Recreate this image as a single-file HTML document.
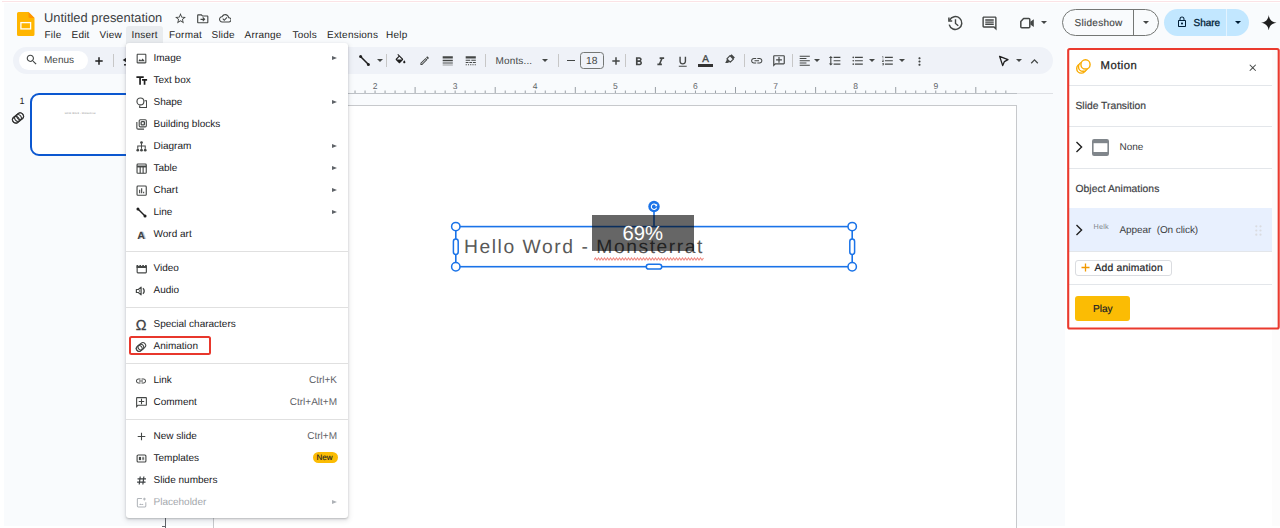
<!DOCTYPE html>
<html><head><meta charset="utf-8"><title>Untitled presentation - Google Slides</title>
<style>
*{box-sizing:border-box;margin:0;padding:0}
html,body{width:1280px;height:528px;overflow:hidden;background:#fff}
body{position:relative;font-family:"Liberation Sans",sans-serif;color:#1f1f1f;-webkit-font-smoothing:antialiased;text-rendering:geometricPrecision}
.a{position:absolute}
.t{position:absolute;white-space:nowrap;line-height:1}
#bg{left:4px;top:3px;width:1276px;height:523px;background:#f9fbfd}
#topline{left:2px;top:1px;width:1278px;height:1px;background:#fbe3e6}
/* menubar */
.mb{font-size:10px;color:#1f1f1f;top:31px;letter-spacing:.22px;margin-left:-.5px}
/* toolbar */
#tb{left:13.300px;top:46.500px;width:1039.700px;height:27.500px;border-radius:14px;background:#eff2f8}
.sep{position:absolute;width:1px;background:#c7c7c7;top:54px;height:13px}
/* dropdown */
#menu{left:126px;top:43px;width:222px;height:475px;background:#fff;border-radius:3px;box-shadow:0 1px 2px rgba(60,64,67,.28),0 2px 5px 1px rgba(60,64,67,.13)}
.mi{position:absolute;left:27.5px;font-size:10px;color:#202124;white-space:nowrap;line-height:1}
.sc{position:absolute;right:11px;font-size:10px;color:#5f6368;white-space:nowrap;line-height:1}
.ar{position:absolute;left:205.500px;width:0;height:0;border-left:5.500px solid #5f6368;border-top:2.600px solid transparent;border-bottom:2.600px solid transparent}
.ms{position:absolute;left:0;width:222px;height:1px;background:#e0e0e0}
/* panel */
#panel{left:1065px;top:48px;width:207px;height:478px;background:#fff}
#pstrip{left:1272px;top:48px;width:8px;height:478px;background:#fcfcfc}
#red{left:1067px;top:48px;width:212.5px;height:281px;border:2px solid #ea3a2e;border-radius:2px}
.pd{position:absolute;left:1069px;width:203px;height:1px;background:#e3e6ea}

.hc{width:9px;height:9px;border-radius:50%;border:1.500px solid #1a73e8;background:#fff}
.hv{width:5.200px;height:15.600px;border-radius:2.600px;border:1.300px solid #1a73e8;background:#fff}
.hh{width:15.600px;height:5.200px;border-radius:2.600px;border:1.300px solid #1a73e8;background:#fff}

.med{-webkit-text-stroke:.25px currentColor}
.med2{-webkit-text-stroke:.18px currentColor}
</style></head><body>
<div class="a" id="bg"></div>
<div class="a" id="topline"></div>

<!-- header -->
<svg class="a" style="left:17px;top:12.200px" width="18" height="24" viewBox="0 0 18 24"><path d="M1.6 0h9.9L17.5 6v16.4a1.6 1.6 0 0 1-1.6 1.6H1.6A1.6 1.6 0 0 1 0 22.400V1.600A1.600 1.600 0 0 1 1.600 0z" fill="#ffb500"/><path d="M11.500 0L17.500 6h-4.400a1.600 1.600 0 0 1-1.600-1.600z" fill="#ff9400"/><rect x="3.900" y="10.600" width="9.700" height="6.300" fill="none" stroke="#fff" stroke-width="1.300"/></svg>
<div class="t" id="title" style="left:44px;top:12px;font-size:12.900px;color:#3c4043">Untitled presentation</div>
<div class="t mb" style="left:45px">File</div>
<div class="t mb" style="left:72px">Edit</div>
<div class="t mb" style="left:100px">View</div>
<div class="a" style="left:126px;top:25.5px;width:37px;height:18px;background:#e9ecef;border-radius:3px 3px 0 0"></div>
<div class="t mb" style="left:132px">Insert</div>
<div class="t mb" style="left:169.500px">Format</div>
<div class="t mb" style="left:212px">Slide</div>
<div class="t mb" style="left:245px">Arrange</div>
<div class="t mb" style="left:293px">Tools</div>
<div class="t mb" style="left:327.500px">Extensions</div>
<div class="t mb" style="left:386.500px">Help</div>


<!-- title icons -->
<svg class="a" style="left:173.800px;top:12px" width="13" height="13" viewBox="0 0 24 24"><path fill="#444746" d="M22 9.240l-7.190-.620L12 2 9.190 8.630 2 9.240l5.460 4.730L5.820 21 12 17.270 18.180 21l-1.630-7.030L22 9.240zM12 15.400l-3.760 2.270 1-4.280-3.320-2.880 4.380-.380L12 6.100l1.710 4.040 4.380.380-3.320 2.880 1 4.280L12 15.400z"/></svg>
<svg class="a" style="left:196px;top:12px" width="13.500" height="13.500" viewBox="0 0 24 24"><path fill="#444746" d="M20 6h-8l-2-2H4c-1.100 0-2 .900-2 2v12c0 1.100.900 2 2 2h16c1.100 0 2-.900 2-2V8c0-1.100-.900-2-2-2zm0 12H4V6h5.170l2 2H20v10zm-7.160-4H8v-2h4.840l-1.590-1.590L12.660 9l4 4-4 4-1.410-1.410L12.840 14z"/></svg>
<svg class="a" style="left:218.700px;top:12.300px" width="12.600" height="12.600" viewBox="0 0 24 24"><path fill="#444746" d="M19.350 10.040C18.670 6.590 15.640 4 12 4 9.110 4 6.600 5.640 5.350 8.040 2.340 8.360 0 10.910 0 14c0 3.310 2.690 6 6 6h13c2.760 0 5-2.240 5-5 0-2.640-2.050-4.780-4.650-4.960zM19 18H6c-2.210 0-4-1.790-4-4 0-2.050 1.530-3.760 3.560-3.970l1.070-.110.500-.950C8.080 7.140 9.940 6 12 6c2.620 0 4.880 1.860 5.390 4.430l.300 1.500 1.530.110c1.560.100 2.780 1.410 2.780 2.960 0 1.650-1.350 3-3 3zm-9-3.820l-2.090-2.090L6.500 13.500 10 17l6.010-6.010-1.410-1.410z"/></svg>
<!-- right header icons -->
<svg class="a" style="left:946px;top:13.500px" width="19" height="19" viewBox="946 13 19 19" fill="none" stroke="#444746" stroke-width="1.500"><path d="M949.600 19.300A6.400 6.400 0 1 1 949.200 23.600"/><path d="M948.900 16.600v3.300h3.300" stroke-linejoin="miter"/><path d="M955.500 18.300v4.200l2.800 2.300" stroke-width="1.400"/></svg>
<svg class="a" style="left:981px;top:15px" width="17" height="17" viewBox="0 0 24 24"><path fill="#444746" d="M21.990 4c0-1.100-.890-2-1.990-2H4c-1.100 0-2 .900-2 2v12c0 1.100.900 2 2 2h14l4 4-.010-18zM20 4v13.170L18.830 16H4V4h16zM6 12h12v2H6zm0-3h12v2H6zm0-3h12v2H6z"/></svg>
<svg class="a" style="left:1016px;top:13px" width="22" height="20" viewBox="1016 13 22 20"><path d="M1023.600 18.500h5.200a1 1 0 0 1 1 1v7.200a1 1 0 0 1-1 1h-7a1 1 0 0 1-1-1v-5.300z" fill="none" stroke="#444746" stroke-width="1.500" stroke-linejoin="round"/><path d="M1030.300 21.800l3.500-2.500v7.600l-3.500-2.500z" fill="#444746"/></svg>
<svg class="a" style="left:1041px;top:21px" width="6" height="3" viewBox="0 0 10 5"><path fill="#444746" d="M0 0l5 5 5-5z"/></svg>
<!-- slideshow -->
<div class="a" style="left:1062px;top:8.500px;width:96.500px;height:27.500px;border:1px solid #747775;border-radius:14px"></div>
<div class="a" style="left:1133px;top:9px;width:1px;height:27px;background:#747775"></div>
<div class="t" style="left:1074.500px;top:19px;font-size:10px;color:#444746;letter-spacing:.28px;-webkit-text-stroke:.15px #444746" id="sshow">Slideshow</div>
<svg class="a" style="left:1143px;top:21px" width="6" height="3" viewBox="0 0 10 5"><path fill="#444746" d="M0 0l5 5 5-5z"/></svg>
<!-- share -->
<div class="a" style="left:1164px;top:9px;width:85px;height:27px;border-radius:14px;background:#c2e7ff"></div>
<div class="a" style="left:1226px;top:9px;width:1px;height:27px;background:#e3f3ff"></div>
<svg class="a" style="left:1175.500px;top:16px" width="12" height="12" viewBox="0 0 24 24"><path fill="#001d35" d="M18 8h-1V6c0-2.760-2.240-5-5-5S7 3.240 7 6v2H6c-1.100 0-2 .900-2 2v10c0 1.100.900 2 2 2h12c1.100 0 2-.900 2-2V10c0-1.100-.900-2-2-2zM9 6c0-1.660 1.340-3 3-3s3 1.340 3 3v2H9V6zm9 14H6V10h12v10zm-6-3c1.100 0 2-.900 2-2s-.900-2-2-2-2 .900-2 2 .900 2 2 2z"/></svg>
<div class="t" style="left:1193.500px;top:19px;font-size:10px;color:#001d35;-webkit-text-stroke:.3px #001d35" id="share">Share</div>
<svg class="a" style="left:1234.500px;top:21px" width="6" height="3" viewBox="0 0 10 5"><path fill="#001d35" d="M0 0l5 5 5-5z"/></svg>
<svg class="a" style="left:1261px;top:14.500px" width="15.500" height="15.500" viewBox="0 0 24 24"><path fill="#1f1f1f" d="M12 0C12.900 7.200 16.800 11.100 24 12 16.800 12.900 12.900 16.800 12 24 11.100 16.800 7.200 12.900 0 12 7.200 11.100 11.100 7.200 12 0z"/></svg>

<!-- toolbar -->
<div class="a" id="tb"></div>
<div class="a" style="left:19px;top:50.500px;width:69px;height:19.500px;border-radius:10px;background:#fff"></div>
<div class="t" style="left:44px;top:56px;font-size:10px;color:#444746">Menus</div>

<svg class="a" style="left:24.800px;top:53.300px" width="13.500" height="13.500" viewBox="0 0 24 24"><path fill="#444746" d="M15.500 14h-.790l-.280-.270C15.410 12.590 16 11.110 16 9.500 16 5.910 13.090 3 9.500 3S3 5.910 3 9.500 5.910 16 9.500 16c1.610 0 3.090-.590 4.230-1.570l.270.280v.790l5 4.990L20.490 19l-4.990-5zm-6 0C7.010 14 5 11.990 5 9.500S7.010 5 9.500 5 14 7.010 14 9.500 11.990 14 9.500 14z"/></svg>
<svg class="a" style="left:95.300px;top:56.500px" width="8" height="8" viewBox="0 0 8 8"><path d="M4 .3v7.400M.3 4h7.400" stroke="#1f1f1f" stroke-width="1.500" fill="none"/></svg>
<div class="sep" style="left:113px"></div>
<svg class="a" style="left:120px;top:54px" width="8" height="14" viewBox="120 54 8 14"><path d="M122.700 60L127 57.300V62.700z" fill="#1f1f1f"/><rect x="124" y="64.100" width="3" height="1.400" fill="#1f1f1f"/></svg>
<svg class="a" style="left:357.500px;top:54px" width="13" height="13" viewBox="0 0 13 13"><path d="M2.500 2.500L10.500 10.500" stroke="#1f1f1f" stroke-width="1.600"/><circle cx="2.600" cy="2.600" r="1.500" fill="#1f1f1f"/><circle cx="10.400" cy="10.400" r="1.500" fill="#1f1f1f"/></svg>
<svg class="a" style="left:376.5px;top:58.5px" width="6" height="3" viewBox="0 0 10 5"><path fill="#444746" d="M0 0l5 5 5-5z"/></svg>
<div class="sep" style="left:386px"></div>
<svg class="a" style="left:393.800px;top:53.800px" width="13" height="13" viewBox="0 0 24 24"><path fill="#1f1f1f" d="M16.560 8.940L7.620 0 6.210 1.410l2.380 2.380-5.150 5.150c-.590.590-.590 1.540 0 2.120l5.500 5.500c.290.290.680.440 1.060.440s.770-.150 1.060-.440l5.500-5.500c.590-.580.590-1.530 0-2.120zM5.210 10L10 5.210 14.790 10H5.210zM19 11.500s-2 2.170-2 3.500c0 1.100.900 2 2 2s2-.900 2-2c0-1.330-2-3.500-2-3.500z"/></svg>
<svg class="a" style="left:418.700px;top:54.800px" width="11.300" height="11.300" viewBox="0 0 24 24"><path fill="#444746" d="M14.060 9.020l.920.920L5.920 19H5v-.920l9.060-9.060M17.660 3c-.250 0-.510.100-.700.290l-1.830 1.830 3.750 3.750 1.830-1.830c.390-.390.390-1.020 0-1.410l-2.340-2.340c-.200-.200-.450-.290-.710-.290zm-3.600 3.190L3 17.250V21h3.750L17.810 9.940l-3.750-3.750z"/></svg>
<svg class="a" style="left:440.800px;top:54.400px" width="13.500" height="13.500" viewBox="0 0 24 24"><path fill="#444746" d="M3 17h18v-2H3v2zm0 3h18v-1H3v1zm0-7h18v-3H3v3zm0-9v4h18V4H3z"/></svg>
<svg class="a" style="left:463.800px;top:54.400px" width="13.500" height="13.500" viewBox="0 0 24 24"><path fill="#444746" d="M3 16h5v-2H3v2zm6.500 0h5v-2h-5v2zm6.500 0h5v-2h-5v2zM3 20h2v-2H3v2zm4 0h2v-2H7v2zm4 0h2v-2h-2v2zm4 0h2v-2h-2v2zm4 0h2v-2h-2v2zM3 12h8v-2H3v2zm10 0h8v-2h-8v2zM3 4v4h18V4H3z"/></svg>
<div class="sep" style="left:485px"></div>
<div class="t" style="left:496px;top:57px;font-size:10px;color:#444746;letter-spacing:.15px;margin-left:-.5px" id="fontname">Monts...</div>
<svg class="a" style="left:541.900px;top:58.600px" width="6" height="3" viewBox="0 0 10 5"><path fill="#444746" d="M0 0l5 5 5-5z"/></svg>
<div class="sep" style="left:558px"></div>
<div class="a" style="left:567.300px;top:59.800px;width:7.700px;height:1.500px;background:#444746"></div>
<div class="a" style="left:580px;top:52px;width:24px;height:17px;border:1px solid #747775;border-radius:3.500px"></div>
<div class="t" style="left:586px;top:56.500px;font-size:10.300px;color:#444746" id="fsize">18</div>
<svg class="a" style="left:611.500px;top:56.500px" width="8" height="8" viewBox="0 0 8 8"><path d="M4 .3v7.400M.3 4h7.400" stroke="#444746" stroke-width="1.500" fill="none"/></svg>
<div class="sep" style="left:625px"></div>
<svg class="a" style="left:632px;top:54.600px" width="13.5" height="13.5" viewBox="0 0 24 24"><path fill="#444746" d="M15.600 10.790c.970-.670 1.650-1.770 1.650-2.790 0-2.260-1.750-4-4-4H7v14h7.040c2.090 0 3.710-1.700 3.710-3.790 0-1.520-.860-2.820-2.150-3.420zM10 6.500h3c.830 0 1.500.670 1.500 1.500s-.670 1.500-1.500 1.500h-3v-3zm3.500 9H10v-3h3.500c.830 0 1.500.670 1.500 1.500s-.670 1.500-1.500 1.500z"/></svg>
<svg class="a" style="left:654px;top:54.800px" width="13.5" height="13.5" viewBox="0 0 24 24"><path fill="#444746" d="M10 4v3h2.210l-3.420 8H6v3h8v-3h-2.210l3.420-8H18V4z"/></svg>
<svg class="a" style="left:676px;top:54.5px" width="13.5" height="13.5" viewBox="0 0 24 24"><path fill="#444746" d="M12 17c3.310 0 6-2.690 6-6V3h-2.500v8c0 1.930-1.570 3.500-3.500 3.500S8.500 12.930 8.500 11V3H6v8c0 3.310 2.690 6 6 6zm-7 2v2h14v-2H5z"/></svg>
<div class="t" style="left:702.300px;top:54.500px;font-size:10px;color:#444746;-webkit-text-stroke:.35px #444746">A</div>
<div class="a" style="left:698px;top:64.400px;width:15.200px;height:2.800px;background:#333"></div>
<svg class="a" style="left:724.500px;top:54px" width="10.500" height="9.500" viewBox="0 0 10.500 9.500"><path d="M6.500 .2L9.900 3.600 8.400 5.100 5 1.700z" fill="#444746"/><path d="M5 1.700L8.400 5.100 5.300 8.200 1.900 4.800z" fill="none" stroke="#444746" stroke-width="1.200" stroke-linejoin="round"/><path d="M2.100 5.200L4.800 7.900 2.500 8.900H.2z" fill="#444746"/></svg>
<div class="sep" style="left:743.5px"></div>
<svg class="a" style="left:749.5px;top:54px" width="13.5" height="13.5" viewBox="0 0 24 24"><path fill="#444746" d="M3.900 12c0-1.710 1.390-3.100 3.100-3.100h4V7H7c-2.760 0-5 2.240-5 5s2.240 5 5 5h4v-1.900H7c-1.710 0-3.100-1.390-3.100-3.100zM8 13h8v-2H8v2zm9-6h-4v1.900h4c1.710 0 3.100 1.390 3.100 3.100s-1.390 3.100-3.100 3.100h-4V17h4c2.760 0 5-2.240 5-5s-2.240-5-5-5z"/></svg>
<svg class="a" style="left:771.500px;top:53.500px" width="14" height="14" viewBox="0 0 24 24"><path fill="#444746" transform="translate(24 0) scale(-1 1)" d="M22 4c0-1.100-.900-2-2-2H4c-1.100 0-2 .900-2 2v12c0 1.100.900 2 2 2h14l4 4V4zm-2 13.170L18.830 16H4V4h16v13.170zM13 5h-2v4H7v2h4v4h2v-4h4V9h-4z"/></svg>
<div class="sep" style="left:791.500px"></div>
<svg class="a" style="left:797.5px;top:54px" width="13.5" height="13.5" viewBox="0 0 24 24"><path fill="#444746" d="M15 15H3v2h12v-2zm0-8H3v2h12V7zM3 13h18v-2H3v2zm0 8h18v-2H3v2zM3 3v2h18V3H3z"/></svg>
<svg class="a" style="left:813.700px;top:58.500px" width="6" height="3" viewBox="0 0 10 5"><path fill="#444746" d="M0 0l5 5 5-5z"/></svg>
<svg class="a" style="left:827.5px;top:54px" width="13.5" height="13.5" viewBox="0 0 24 24"><path fill="#444746" d="M6 7h2.500L5 3.500 1.500 7H4v10H1.500L5 20.500 8.500 17H6V7zm4-2v2h12V5H10zm0 14h12v-2H10v2zm0-6h12v-2H10v2z"/></svg>
<svg class="a" style="left:850.5px;top:54px" width="13.5" height="13.5" viewBox="0 0 24 24"><path fill="#444746" d="M4 10.500c-.830 0-1.500.670-1.500 1.500s.670 1.500 1.500 1.500 1.500-.670 1.500-1.500-.670-1.500-1.500-1.500zm0-6c-.830 0-1.500.670-1.500 1.500S3.170 7.500 4 7.500 5.500 6.830 5.500 6 4.830 4.500 4 4.500zm0 12c-.830 0-1.500.680-1.500 1.500s.680 1.500 1.500 1.500 1.500-.680 1.500-1.500-.670-1.500-1.500-1.500zM7 19h14v-2H7v2zm0-6h14v-2H7v2zm0-8v2h14V5H7z"/></svg>
<svg class="a" style="left:869px;top:58.5px" width="6" height="3" viewBox="0 0 10 5"><path fill="#444746" d="M0 0l5 5 5-5z"/></svg>
<svg class="a" style="left:881px;top:54px" width="13.5" height="13.5" viewBox="0 0 24 24"><path fill="#444746" d="M2 17h2v.500H3v1h1v.500H2v1h3v-4H2v1zm1-9h1V4H2v1h1v3zm-1 3h1.800L2 13.100v.900h3v-1H3.200L5 10.900V10H2v1zm5-6v2h14V5H7zm0 14h14v-2H7v2zm0-6h14v-2H7v2z"/></svg>
<svg class="a" style="left:899px;top:58.5px" width="6" height="3" viewBox="0 0 10 5"><path fill="#444746" d="M0 0l5 5 5-5z"/></svg>
<svg class="a" style="left:912.5px;top:54.5px" width="13" height="13" viewBox="0 0 24 24"><path fill="#444746" d="M12 8c1.100 0 2-.900 2-2s-.900-2-2-2-2 .900-2 2 .900 2 2 2zm0 2c-1.100 0-2 .900-2 2s.900 2 2 2 2-.900 2-2-.900-2-2-2zm0 6c-1.100 0-2 .900-2 2s.900 2 2 2 2-.900 2-2-.900-2-2-2z"/></svg>
<svg class="a" style="left:997px;top:54px" width="14" height="14" viewBox="0 0 14 14"><path d="M2.600 2.300L11 5.600 7.400 7.600 5.700 11.600z" fill="none" stroke="#1f1f1f" stroke-width="1.300" stroke-linejoin="round"/></svg>
<svg class="a" style="left:1015.5px;top:58.5px" width="6" height="3" viewBox="0 0 10 5"><path fill="#444746" d="M0 0l5 5 5-5z"/></svg>
<svg class="a" style="left:1026.500px;top:53.700px" width="15" height="15" viewBox="0 0 24 24"><path fill="#444746" d="M12 8l-6 6 1.410 1.410L12 10.830l4.590 4.580L18 14z"/></svg>

<!-- ruler -->
<div class="a" style="left:126px;top:92.500px;width:890.500px;height:1.500px;background:#bdc1c6"></div>
<div class="a" style="left:1016.500px;top:93px;width:36px;height:1px;background:#dfe1e5"></div>
<svg class="a" style="left:0;top:0" width="1280" height="100" viewBox="0 0 1280 100" fill="#9aa0a6"><rect x="214.35" y="90.5" width="1" height="2.5"/><rect x="224.36" y="90.5" width="1" height="2.5"/><rect x="234.38" y="90.5" width="1" height="2.5"/><rect x="244.39" y="90.5" width="1" height="2.5"/><rect x="254.40" y="87.0" width="1" height="6"/><rect x="264.41" y="90.5" width="1" height="2.5"/><rect x="274.43" y="90.5" width="1" height="2.5"/><rect x="284.44" y="90.5" width="1" height="2.5"/><rect x="294.45" y="90.5" width="1" height="2.5"/><rect x="304.46" y="90.5" width="1" height="2.5"/><rect x="314.48" y="90.5" width="1" height="2.5"/><rect x="324.49" y="90.5" width="1" height="2.5"/><rect x="334.50" y="87.0" width="1" height="6"/><rect x="344.51" y="90.5" width="1" height="2.5"/><rect x="354.52" y="90.5" width="1" height="2.5"/><rect x="364.54" y="90.5" width="1" height="2.5"/><rect x="374.55" y="90.5" width="1" height="2.5"/><rect x="384.56" y="90.5" width="1" height="2.5"/><rect x="394.57" y="90.5" width="1" height="2.5"/><rect x="404.59" y="90.5" width="1" height="2.5"/><rect x="414.60" y="87.0" width="1" height="6"/><rect x="424.61" y="90.5" width="1" height="2.5"/><rect x="434.62" y="90.5" width="1" height="2.5"/><rect x="444.64" y="90.5" width="1" height="2.5"/><rect x="454.65" y="90.5" width="1" height="2.5"/><rect x="464.66" y="90.5" width="1" height="2.5"/><rect x="474.67" y="90.5" width="1" height="2.5"/><rect x="484.69" y="90.5" width="1" height="2.5"/><rect x="494.70" y="87.0" width="1" height="6"/><rect x="504.71" y="90.5" width="1" height="2.5"/><rect x="514.73" y="90.5" width="1" height="2.5"/><rect x="524.74" y="90.5" width="1" height="2.5"/><rect x="534.75" y="90.5" width="1" height="2.5"/><rect x="544.76" y="90.5" width="1" height="2.5"/><rect x="554.77" y="90.5" width="1" height="2.5"/><rect x="564.79" y="90.5" width="1" height="2.5"/><rect x="574.80" y="87.0" width="1" height="6"/><rect x="584.81" y="90.5" width="1" height="2.5"/><rect x="594.82" y="90.5" width="1" height="2.5"/><rect x="604.84" y="90.5" width="1" height="2.5"/><rect x="614.85" y="90.5" width="1" height="2.5"/><rect x="624.86" y="90.5" width="1" height="2.5"/><rect x="634.88" y="90.5" width="1" height="2.5"/><rect x="644.89" y="90.5" width="1" height="2.5"/><rect x="654.90" y="87.0" width="1" height="6"/><rect x="664.91" y="90.5" width="1" height="2.5"/><rect x="674.92" y="90.5" width="1" height="2.5"/><rect x="684.94" y="90.5" width="1" height="2.5"/><rect x="694.95" y="90.5" width="1" height="2.5"/><rect x="704.96" y="90.5" width="1" height="2.5"/><rect x="714.97" y="90.5" width="1" height="2.5"/><rect x="724.99" y="90.5" width="1" height="2.5"/><rect x="735.00" y="87.0" width="1" height="6"/><rect x="745.01" y="90.5" width="1" height="2.5"/><rect x="755.02" y="90.5" width="1" height="2.5"/><rect x="765.04" y="90.5" width="1" height="2.5"/><rect x="775.05" y="90.5" width="1" height="2.5"/><rect x="785.06" y="90.5" width="1" height="2.5"/><rect x="795.07" y="90.5" width="1" height="2.5"/><rect x="805.09" y="90.5" width="1" height="2.5"/><rect x="815.10" y="87.0" width="1" height="6"/><rect x="825.11" y="90.5" width="1" height="2.5"/><rect x="835.12" y="90.5" width="1" height="2.5"/><rect x="845.14" y="90.5" width="1" height="2.5"/><rect x="855.15" y="90.5" width="1" height="2.5"/><rect x="865.16" y="90.5" width="1" height="2.5"/><rect x="875.17" y="90.5" width="1" height="2.5"/><rect x="885.19" y="90.5" width="1" height="2.5"/><rect x="895.20" y="87.0" width="1" height="6"/><rect x="905.21" y="90.5" width="1" height="2.5"/><rect x="915.23" y="90.5" width="1" height="2.5"/><rect x="925.24" y="90.5" width="1" height="2.5"/><rect x="935.25" y="90.5" width="1" height="2.5"/><rect x="945.26" y="90.5" width="1" height="2.5"/><rect x="955.27" y="90.5" width="1" height="2.5"/><rect x="965.29" y="90.5" width="1" height="2.5"/><rect x="975.30" y="87.0" width="1" height="6"/><rect x="985.31" y="90.5" width="1" height="2.5"/><rect x="995.32" y="90.5" width="1" height="2.5"/><rect x="1005.34" y="90.5" width="1" height="2.5"/></svg>
<div class="t" style="left:288.9px;top:82px;width:12px;text-align:center;font-size:8.500px;color:#5f6368">1</div>
<div class="t" style="left:369.0px;top:82px;width:12px;text-align:center;font-size:8.500px;color:#5f6368">2</div>
<div class="t" style="left:449.1px;top:82px;width:12px;text-align:center;font-size:8.500px;color:#5f6368">3</div>
<div class="t" style="left:529.2px;top:82px;width:12px;text-align:center;font-size:8.500px;color:#5f6368">4</div>
<div class="t" style="left:609.4px;top:82px;width:12px;text-align:center;font-size:8.500px;color:#5f6368">5</div>
<div class="t" style="left:689.4px;top:82px;width:12px;text-align:center;font-size:8.500px;color:#5f6368">6</div>
<div class="t" style="left:769.5px;top:82px;width:12px;text-align:center;font-size:8.500px;color:#5f6368">7</div>
<div class="t" style="left:849.6px;top:82px;width:12px;text-align:center;font-size:8.500px;color:#5f6368">8</div>
<div class="t" style="left:929.8px;top:82px;width:12px;text-align:center;font-size:8.500px;color:#5f6368">9</div>


<!-- slide -->
<div class="a" style="left:213px;top:105px;width:804px;height:430px;background:#fff;border:1px solid #c7c9cc"></div>


<!-- filmstrip -->
<div class="t" style="left:19.500px;top:97px;font-size:9px;color:#1f1f1f">1</div>
<svg class="a" style="left:10.100px;top:109.800px" width="16" height="16" viewBox="0 0 16 16" fill="none" stroke="#333" stroke-width="1.050"><g transform="rotate(-40 8 8)"><rect x="1.900" y="4.700" width="12.200" height="6.600" rx="3.300"/><circle cx="5.200" cy="8" r="3.300"/><circle cx="8" cy="8" r="3.300"/><circle cx="10.800" cy="8" r="3.300"/></g></svg>
<div class="a" style="left:30px;top:93px;width:112px;height:62.500px;border:2px solid #0b57d0;border-radius:9px;background:#fff"></div>
<div class="t" style="left:64.800px;top:113.300px;font-size:2.600px;color:#888;letter-spacing:.15px">Hello Word - Monsterrat</div>
<!-- vertical ruler hint -->
<div class="a" style="left:164.500px;top:517px;width:1.200px;height:11px;background:#5f6368"></div>
<div class="a" style="left:162px;top:525.500px;width:3px;height:1px;background:#5f6368"></div>

<!-- slide content -->
<div class="t" id="hello" style="left:464px;top:238px;font-size:19.300px;color:#595959;letter-spacing:1.55px">Hello Word - Monsterrat</div>
<svg class="a" style="left:593.500px;top:256.800px" width="111" height="4" viewBox="0 0 111 4"><path d="M0 3 l1.500 -2 l1.500 2 l1.500 -2 l1.500 2 l1.500 -2 l1.500 2 l1.500 -2 l1.500 2 l1.500 -2 l1.500 2 l1.500 -2 l1.500 2 l1.500 -2 l1.500 2 l1.500 -2 l1.500 2 l1.500 -2 l1.500 2 l1.500 -2 l1.500 2 l1.500 -2 l1.500 2 l1.500 -2 l1.500 2 l1.500 -2 l1.500 2 l1.500 -2 l1.500 2 l1.500 -2 l1.500 2 l1.500 -2 l1.500 2 l1.500 -2 l1.500 2 l1.500 -2 l1.500 2 l1.500 -2 l1.500 2 l1.500 -2 l1.500 2 l1.500 -2 l1.500 2 l1.500 -2 l1.500 2 l1.500 -2 l1.500 2 l1.500 -2 l1.500 2 l1.500 -2 l1.500 2 l1.500 -2 l1.500 2 l1.500 -2 l1.500 2 l1.500 -2 l1.500 2 l1.500 -2 l1.500 2 l1.500 -2 l1.500 2 l1.500 -2 l1.500 2 l1.500 -2 l1.500 2 l1.500 -2 l1.500 2 l1.500 -2 l1.500 2 l1.500 -2 l1.500 2 l1.500 -2 l1.500 2 l1.500 -2" fill="none" stroke="#f08c84" stroke-width="1.150"/></svg>
<!-- selection -->
<svg class="a" style="left:440px;top:190px" width="430" height="100" viewBox="440 190 430 100">
<g fill="none" stroke="#1a73e8" stroke-width="1.600">
<rect x="455.800" y="226.600" width="396.400" height="40.100"/>
<path d="M654 211.500V226.600"/>
</g>
<g fill="#fff" stroke="#1a73e8" stroke-width="1.500">
<circle cx="455.800" cy="226.600" r="4.200"/><circle cx="852.200" cy="226.600" r="4.200"/>
<circle cx="455.800" cy="266.700" r="4.200"/><circle cx="852.200" cy="266.700" r="4.200"/>
<rect x="453.400" y="239" width="4.800" height="15.400" rx="2.400"/>
<rect x="849.800" y="239" width="4.800" height="15.400" rx="2.400"/>
<rect x="646.300" y="264.300" width="15.400" height="4.800" rx="2.400"/>
</g>
<circle cx="654" cy="206.500" r="5.700" fill="#1a73e8"/>
<path d="M656.300 205.300A2.700 2.700 0 1 0 656.600 207.600" fill="none" stroke="#fff" stroke-width="1.100"/><path d="M657.100 203.800v2.400h-2.400z" fill="#fff"/>
</svg>
<!-- zoom overlay -->
<div class="a" style="left:592px;top:215px;width:102px;height:35.500px;background:rgba(0,0,0,.6)"></div>
<div class="t" id="pct" style="left:622.500px;top:223.500px;font-size:20.300px;color:#fff">69%</div>

<!-- panel -->
<div class="a" id="panel"></div>
<div class="a" id="pstrip"></div>
<div class="a" style="left:1069px;top:208px;width:202.500px;height:42.500px;background:#e8f0fe"></div>
<div class="pd" style="top:85px"></div>
<div class="pd" style="top:125.500px"></div>
<div class="pd" style="top:167.500px"></div>
<div class="pd" style="top:250.500px"></div>
<div class="pd" style="top:284px"></div>
<!-- motion icon -->
<svg class="a" style="left:1075px;top:58px" width="17" height="17" viewBox="0 0 17 17" fill="#fff" stroke="#f9ab00" stroke-width="1.400"><circle cx="6.300" cy="10.500" r="4.600"/><circle cx="8.100" cy="8.700" r="4.600"/><circle cx="10.500" cy="6.400" r="4.600"/></svg>
<div class="t med" id="motion" style="left:1100.500px;top:60.500px;font-size:11.300px;color:#1f1f1f;letter-spacing:.5px">Motion</div>
<svg class="a" style="left:1247px;top:61.500px" width="11.500" height="11.500" viewBox="0 0 24 24"><path fill="#444746" d="M19 6.410L17.590 5 12 10.590 6.410 5 5 6.410 10.590 12 5 17.590 6.410 19 12 13.410 17.590 19 19 17.590 13.410 12z"/></svg>
<div class="t med2" id="strans" style="left:1075.500px;top:101.500px;font-size:10.300px;color:#3c4043;letter-spacing:0">Slide Transition</div>
<svg class="a" style="left:1074.500px;top:141px" width="8.500" height="12" viewBox="0 0 9 13"><path d="M1.500 1.200L7 6.500 1.500 11.800" fill="none" stroke="#1f1f1f" stroke-width="1.500"/></svg>
<svg class="a" style="left:1092px;top:138.500px" width="17" height="17" viewBox="0 0 17 17"><rect x=".800" y=".800" width="15.400" height="15.400" rx="1.500" fill="#fff" stroke="#80868b" stroke-width="1.600"/><rect x=".800" y=".800" width="15.400" height="3.400" fill="#80868b"/><rect x=".800" y="13" width="15.400" height="3.200" fill="#80868b"/></svg>
<div class="t" id="none" style="left:1119.500px;top:142.500px;font-size:10px;color:#3c4043">None</div>
<div class="t med2" id="oanim" style="left:1075.500px;top:184.500px;font-size:10.300px;color:#3c4043;letter-spacing:.05px">Object Animations</div>
<svg class="a" style="left:1074.500px;top:224px" width="8.500" height="12" viewBox="0 0 9 13"><path d="M1.500 1.200L7 6.500 1.500 11.800" fill="none" stroke="#1f1f1f" stroke-width="1.500"/></svg>
<div class="t" style="left:1093.500px;top:223px;font-size:7.200px;color:#80868b;letter-spacing:.25px" id="helk">Helk</div>
<div class="t" id="appear" style="left:1119.500px;top:226px;font-size:10px;color:#3c4043;letter-spacing:-.08px">Appear&nbsp; (On click)</div>
<svg class="a" style="left:1254.500px;top:224.500px" width="7" height="11" viewBox="0 0 7 11" fill="#dadce0"><circle cx="1.300" cy="1.300" r="1.100"/><circle cx="5.500" cy="1.300" r="1.100"/><circle cx="1.300" cy="5.500" r="1.100"/><circle cx="5.500" cy="5.500" r="1.100"/><circle cx="1.300" cy="9.700" r="1.100"/><circle cx="5.500" cy="9.700" r="1.100"/></svg>
<div class="a" style="left:1075px;top:259.500px;width:96.500px;height:16.500px;border:1px solid #dadce0;border-radius:3px;background:#fff"></div>
<svg class="a" style="left:1080.500px;top:263px" width="9" height="9" viewBox="0 0 9 9"><path d="M4.500 .500v8M.500 4.500h8" stroke="#f29900" stroke-width="1.300"/></svg>
<div class="t med2" id="addanim" style="left:1094.500px;top:264px;font-size:10.300px;color:#202124;letter-spacing:.2px">Add animation</div>
<div class="a" style="left:1075px;top:296px;width:55px;height:24.500px;border-radius:3px;background:#fbbc04"></div>
<div class="t med2" id="play" style="left:1093px;top:304.500px;font-size:10.100px;color:#202124">Play</div>
<svg class="a" style="left:1060px;top:40px" width="220" height="300" viewBox="1060 40 220 300"><rect x="1068.200" y="49" width="210.500" height="279.500" rx="1.500" fill="none" stroke="#ea3a2e" stroke-width="2.100"/></svg>


<!-- dropdown -->
<div class="a" id="menu">
<div class="ms" style="top:207.5px"></div>
<div class="ms" style="top:263.5px"></div>
<div class="ms" style="top:319.5px"></div>
<div class="ms" style="top:375.5px"></div>
<div class="a" style="left:8.8px;top:9.2px;width:13px;height:13px;line-height:0"><svg width="13" height="13" viewBox="0 0 24 24"><path fill="#444746" d="M19 5v14H5V5h14m0-2H5c-1.100 0-2 .900-2 2v14c0 1.100.900 2 2 2h14c1.100 0 2-.900 2-2V5c0-1.100-.900-2-2-2zm-4.860 8.860l-3 3.870L9 13.140 6 17h12l-3.860-5.140z"/></svg></div><div class="mi" style="top:11px">Image</div><div class="ar" style="top:13.3px"></div>
<div class="a" style="left:8.55px;top:30.95px;width:13.5px;height:13.5px;line-height:0"><svg width="13.5" height="13.5" viewBox="0 0 24 24"><path fill="#1f1f1f" d="M2.500 4v3h5v12h3V7h5V4h-13zm19 5h-9v3h3v7h3v-7h3V9z"/></svg></div><div class="mi" style="top:33px">Text box</div>
<div class="a" style="left:9.55px;top:53.95px;width:11.5px;height:11.5px;line-height:0"><svg width="11.5" height="11.5" viewBox="0 0 13 13" fill="none" stroke="#444746" stroke-width="1.300"><circle cx="5" cy="5" r="3.900"/><path d="M9.700 4.200h2.300v7.800H4.200V9.700"/></svg></div><div class="mi" style="top:55px">Shape</div><div class="ar" style="top:57.3px"></div>
<div class="a" style="left:9.8px;top:76.2px;width:11px;height:11px;line-height:0"><svg width="11" height="11" viewBox="0 0 13 13" fill="none" stroke="#444746" stroke-width="1.300"><rect x="3.800" y=".900" width="8.400" height="8.400" rx="1.300"/><path d="M1 3.500v7a1.500 1.500 0 0 0 1.500 1.500h7"/><rect x="6.100" y="3.200" width="3.800" height="3.800" rx=".700" stroke-width="1.500"/></svg></div><div class="mi" style="top:77px">Building blocks</div>
<div class="a" style="left:9.8px;top:98.2px;width:11px;height:11px;line-height:0"><svg width="11" height="11" viewBox="0 0 13 13" fill="#444746"><circle cx="6.500" cy="1.800" r="1.600"/><path d="M5.900 3h1.200v2.400h4.400v3.800h-1.200V6.600H7.100v2.600H5.900V6.600H2.700v2.600H1.500V5.400h4.400z"/><circle cx="2.100" cy="10.900" r="1.600"/><circle cx="6.500" cy="10.900" r="1.600"/><circle cx="10.900" cy="10.900" r="1.600"/></svg></div><div class="mi" style="top:99px">Diagram</div><div class="ar" style="top:101.3px"></div>
<div class="a" style="left:9.65px;top:120.05px;width:11.3px;height:11.3px;line-height:0"><svg width="11.3" height="11.3" viewBox="0 0 13 13" fill="none" stroke="#444746" stroke-width="1.300"><rect x="1.200" y="1.200" width="10.600" height="10.600" rx="1"/><path d="M1.200 4h10.600" stroke-width="2.200"/><path d="M4.800 4v7.700M8.200 4v7.700"/></svg></div><div class="mi" style="top:121px">Table</div><div class="ar" style="top:123.3px"></div>
<div class="a" style="left:9.65px;top:142.05px;width:11.3px;height:11.3px;line-height:0"><svg width="11.3" height="11.3" viewBox="0 0 13 13" fill="none" stroke="#444746" stroke-width="1.300"><rect x="1.200" y="1.200" width="10.600" height="10.600" rx="1"/><path d="M4.200 5.500v4M6.500 3.800v5.700M8.800 7.800v1.700"/></svg></div><div class="mi" style="top:143px">Chart</div><div class="ar" style="top:145.3px"></div>
<div class="a" style="left:9.8px;top:164.2px;width:11px;height:11px;line-height:0"><svg width="11" height="11" viewBox="0 0 13 13" ><path d="M2.300 2.300L10.700 10.700" stroke="#1f1f1f" stroke-width="1.700"/><circle cx="2.300" cy="2.300" r="1.800" fill="#1f1f1f"/><circle cx="10.700" cy="10.700" r="1.800" fill="#1f1f1f"/></svg></div><div class="mi" style="top:165px">Line</div><div class="ar" style="top:167.3px"></div>
<div class="a" style="left:9.8px;top:186.2px;width:11px;height:11px;line-height:0"><svg width="11" height="11" viewBox="0 0 13 13" ><text x="3" y="11.800" font-family="Liberation Sans, sans-serif" font-weight="bold" font-size="12.500" fill="#bdc1c6">A</text><text x="1.600" y="11.800" font-family="Liberation Sans, sans-serif" font-weight="bold" font-size="12.500" fill="#3c4043">A</text></svg></div><div class="mi" style="top:187px">Word art</div>
<div class="a" style="left:9.55px;top:219.95px;width:11.5px;height:11.5px;line-height:0"><svg width="11.5" height="11.5" viewBox="0 0 13 13" fill="none" stroke="#444746" stroke-width="1.300"><path d="M1.300 3v7.300a.800.800 0 0 0 .800.800h8.800a.800.800 0 0 0 .800-.800V3"/><path d="M.650 2.200h1.900v1.300h1.300V2.200h1.900v1.300h1.300V2.200h1.900v1.300h1.300V2.200h1.800v3.500H.650z" fill="#444746" stroke="none"/></svg></div><div class="mi" style="top:221px">Video</div>
<div class="a" style="left:9.3px;top:241.7px;width:12px;height:12px;line-height:0"><svg width="12" height="12" viewBox="0 0 13 13" fill="none" stroke="#444746" stroke-width="1.300"><path d="M1.500 4.900h2.100l3-2.500v8.200l-3-2.500H1.500z" stroke-linejoin="round"/><circle cx="4.900" cy="6.500" r=".800" fill="#444746" stroke="none"/><path d="M8.600 3.400a4.200 4.200 0 0 1 0 6.200" stroke-width="1.500"/></svg></div><div class="mi" style="top:243px">Audio</div>
<div class="a" style="left:9.3px;top:275.7px;width:12px;height:12px;line-height:0"><svg width="12" height="12" viewBox="0 0 13 13" ><text x="6.500" y="11.800" text-anchor="middle" font-family="Liberation Sans, sans-serif" font-size="15.500" fill="#3c4043" stroke="#3c4043" stroke-width=".350">Ω</text></svg></div><div class="mi" style="top:277px">Special characters</div>
<div class="a" style="left:9.3px;top:297.7px;width:12px;height:12px;line-height:0"><svg width="12" height="12" viewBox="0 0 13 13" fill="none" stroke="#444746" stroke-width="1.150"><g transform="rotate(-40 6.500 6.500)"><rect x=".900" y="3.400" width="11.200" height="6.200" rx="3.100"/><circle cx="4" cy="6.500" r="3.100"/><circle cx="6.300" cy="6.500" r="3.100"/></g></svg></div><div class="mi" style="top:299px">Animation</div>
<div class="a" style="left:9.3px;top:331.7px;width:12px;height:12px;line-height:0"><svg width="12" height="12" viewBox="0 0 24 24"><path fill="#444746" d="M3.900 12c0-1.710 1.390-3.100 3.100-3.100h4V7H7c-2.760 0-5 2.240-5 5s2.240 5 5 5h4v-1.900H7c-1.710 0-3.100-1.390-3.100-3.100zM8 13h8v-2H8v2zm9-6h-4v1.900h4c1.710 0 3.100 1.390 3.100 3.100s-1.390 3.100-3.100 3.100h-4V17h4c2.760 0 5-2.240 5-5s-2.240-5-5-5z"/></svg></div><div class="mi" style="top:333px">Link</div><div class="sc" style="top:333px">Ctrl+K</div>
<div class="a" style="left:8.8px;top:353.2px;width:13px;height:13px;line-height:0"><svg width="13" height="13" viewBox="0 0 24 24"><path fill="#444746" transform="translate(24 0) scale(-1 1)" d="M22 4c0-1.100-.900-2-2-2H4c-1.100 0-2 .900-2 2v12c0 1.100.900 2 2 2h14l4 4V4zm-2 13.170L18.830 16H4V4h16v13.170zM13 5h-2v4H7v2h4v4h2v-4h4V9h-4z"/></svg></div><div class="mi" style="top:355px">Comment</div><div class="sc" style="top:355px">Ctrl+Alt+M</div>
<div class="a" style="left:8.8px;top:387.2px;width:13px;height:13px;line-height:0"><svg width="13" height="13" viewBox="0 0 24 24"><path fill="#444746" d="M19 13h-6v6h-2v-6H5v-2h6V5h2v6h6v2z"/></svg></div><div class="mi" style="top:389px">New slide</div><div class="sc" style="top:389px">Ctrl+M</div>
<div class="a" style="left:9.8px;top:410.2px;width:11px;height:11px;line-height:0"><svg width="11" height="11" viewBox="0 0 13 13" fill="none" stroke="#444746" stroke-width="1.300"><rect x="1.300" y="2.400" width="10.400" height="8.200" rx="1.200"/><rect x="3.400" y="4.600" width="2.600" height="3.800" fill="#444746" stroke="none"/><path d="M7.300 5.100h2.400M7.300 6.500h2.400M7.300 7.900h2.400" stroke-width=".900"/></svg></div><div class="mi" style="top:411px">Templates</div>
<div class="a" style="left:9.8px;top:432.2px;width:11px;height:11px;line-height:0"><svg width="11" height="11" viewBox="0 0 13 13" fill="none" stroke="#3c4043" stroke-width="1.400"><path d="M5 1.800L3.800 11.200M9.300 1.800L8.100 11.200M1.800 4.600h10M1.300 8.400h10"/></svg></div><div class="mi" style="top:433px">Slide numbers</div>
<div class="a" style="left:9.8px;top:454.2px;width:11px;height:11px;line-height:0"><svg width="11" height="11" viewBox="0 0 13 13" fill="none" stroke="#b0b4b9" stroke-width="1.200"><path d="M7 1.700H2.600a1 1 0 0 0-1 1v8a1 1 0 0 0 1 1h8a1 1 0 0 0 1-1V6.200"/><path d="M9.900 .800v3.400M8.200 2.500h3.400"/><path d="M3.600 9.600l1.700-2 1.300 1.400 1-1 1.400 1.600z" fill="#b0b4b9" stroke="none"/></svg></div><div class="mi" style="top:455px;color:#a4a8ad">Placeholder</div><div class="ar" style="top:457.3px;border-left-color:#aeb2b7"></div>
<div class="a" style="left:186.500px;top:408.500px;width:25px;height:11.500px;border-radius:6px;background:#fbbc04"></div><div class="t" style="left:190.500px;top:410.500px;font-size:8px;color:#202124;-webkit-text-stroke:.15px #202124">New</div>
<div class="a" style="left:3px;top:292.500px;width:81.500px;height:19.500px;border:2px solid #e8372c;border-radius:2.500px"></div>
</div>
</body></html>
